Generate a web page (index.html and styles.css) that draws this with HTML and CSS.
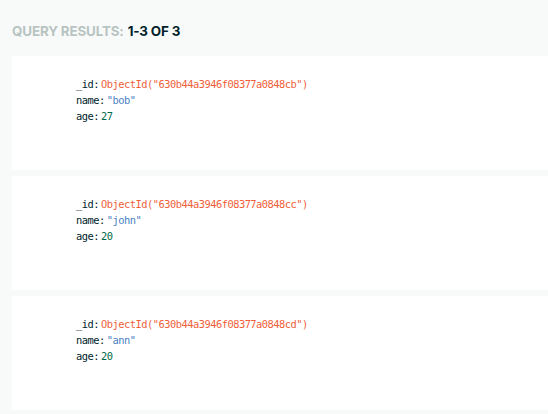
FILE: index.html
```html
<!DOCTYPE html>
<html>
<head>
<meta charset="utf-8">
<link rel="stylesheet" href="styles.css">
</head>
<body>
<div class="page">
  <div class="header"><span class="label">Query Results:</span> <span class="count">1-3 of 3</span></div>
  <div class="list">
    <div class="card">
      <div class="row"><span class="key">_id:</span><span class="oid">ObjectId("630b44a3946f08377a0848cb")</span></div>
      <div class="row"><span class="key">name:</span><span class="str">"bob"</span></div>
      <div class="row"><span class="key">age:</span><span class="num">27</span></div>
    </div>
    <div class="card">
      <div class="row"><span class="key">_id:</span><span class="oid">ObjectId("630b44a3946f08377a0848cc")</span></div>
      <div class="row"><span class="key">name:</span><span class="str">"john"</span></div>
      <div class="row"><span class="key">age:</span><span class="num">20</span></div>
    </div>
    <div class="card">
      <div class="row"><span class="key">_id:</span><span class="oid">ObjectId("630b44a3946f08377a0848cd")</span></div>
      <div class="row"><span class="key">name:</span><span class="str">"ann"</span></div>
      <div class="row"><span class="key">age:</span><span class="num">20</span></div>
    </div>
  </div>
</div>
</body>
</html>
```
FILE: styles.css
```css
html, body {
  margin: 0;
  padding: 0;
  background: #f8faf9;
}
.page {
  padding: 0 0 0 12px;
}
.header {
  height: 56px;
  display: flex;
  align-items: center;
  gap: 4px;
  font-family: Inter, "Noto Sans", sans-serif;
  font-weight: 700;
  font-size: 13.4px;
  text-transform: uppercase;
  padding-top: 6px;
  box-sizing: border-box;
  letter-spacing: -0.15px;
}
.label { color: #b8c4c2; }
.count { color: #001e2b; }
.list {
  display: flex;
  flex-direction: column;
  gap: 6px;
}
.card {
  background: #ffffff;
  height: 114px;
  box-sizing: border-box;
  padding: 20px 0 0 64px;
  font-family: "DejaVu Sans Mono", monospace;
  font-size: 10.4px;
  letter-spacing: -0.51px;
}
.row {
  height: 16px;
  line-height: 16px;
  white-space: nowrap;
}
.key {
  color: #001e2b;
  margin-right: 2px;
}
.oid { color: #f05f3c; }
.str { color: #4a7fc4; }
.num { color: #00684a; }
```
